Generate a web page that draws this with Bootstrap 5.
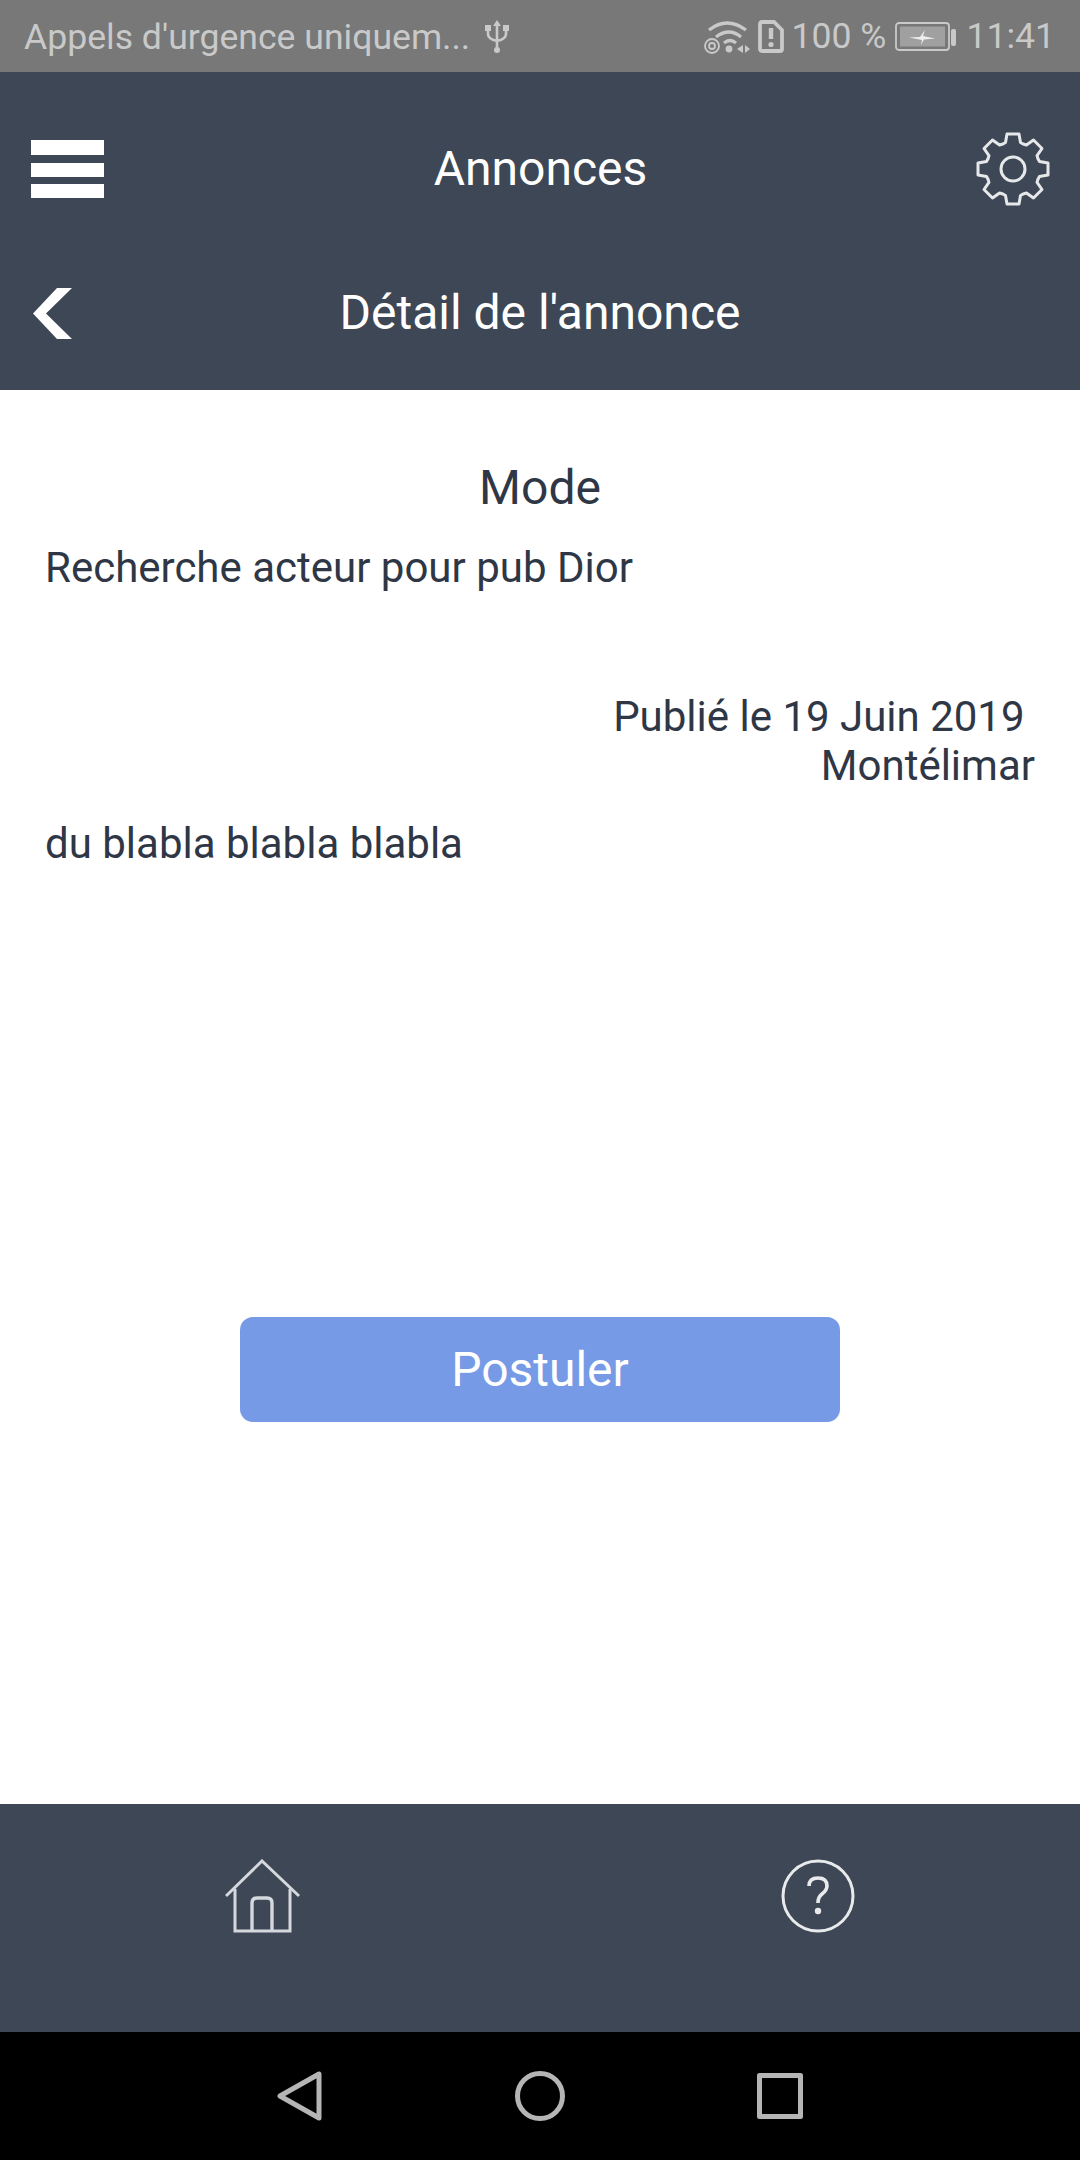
<!DOCTYPE html>
<html lang="fr">
<head>
<meta charset="utf-8">
<title>Détail de l'annonce</title>
<link rel="stylesheet" href="https://cdn.jsdelivr.net/npm/bootstrap@5.3.0/dist/css/bootstrap.min.css">
<style>
html,body{margin:0;background:#fff}
body{font-family:Roboto,"Liberation Sans",sans-serif;color:#2f3746}
.phone{width:1080px;height:2160px}
.statusbar{height:72px;background:#777877;color:#c9c9c9;font-size:35.600px;padding:2px 25px 0 24px;flex:none}
.statusbar svg{display:block}
.st-left{gap:15px}
.st-msg{line-height:70px}
.st-right{gap:8px}
.st-gap{margin-left:1px}
.top-head{height:194px;background:#3e4756;color:#fff;padding:0 30px 0 31px;flex:none}
.sub-head{height:124px;background:#3e4756;color:#fff;padding:0 0 30px 33px;flex:none}
.head-title{font-size:48px;line-height:1}
.side-slot{width:74px}
.detail-title{margin-left:-72px}
.main-area{flex:1 1 auto;padding:71px 45px 0;font-size:42px;line-height:49px}
.ad-title{font-size:48px;line-height:54px;margin:0 0 28px;font-weight:400;text-align:center}
.ad-text{margin:0}
.ad-meta{margin:100px 0 29px;text-align:right;white-space:pre-wrap}
.apply-btn{width:600px;height:105px;margin:449px auto 0;display:block;background:#769ae6;border:0;border-radius:13px;color:#fff;font-size:48px;line-height:105px;padding:0}
.foot-bar{height:228px;background:#3e4756;flex:none;padding:55px 225px 0 225px}
.nav-bar{height:128px;background:#000;flex:none;padding:0 277px 0 277px}
</style>
</head>
<body>
<div class="phone d-flex flex-column">
  <div class="statusbar d-flex justify-content-between align-items-center">
    <div class="st-left d-flex align-items-center">
      <span class="st-msg">Appels d'urgence uniquem...</span>
      <svg width="24" height="34" viewBox="0 0 24 34" fill="none" stroke="#c9c9c9" stroke-width="2.6"><path d="M12 5V30M3 9V14Q3 19 12 21Q21 19 21 14V9"/><path d="M12 0L16 6H8Z" fill="#c9c9c9" stroke="none"/><circle cx="12" cy="30" r="3" fill="#c9c9c9" stroke="none"/><rect x="0" y="5" width="6" height="6" fill="#c9c9c9" stroke="none"/><rect x="18" y="5" width="6" height="6" fill="#c9c9c9" stroke="none"/></svg>
    </div>
    <div class="st-right d-flex align-items-center">
      <svg width="46" height="34" viewBox="0 0 46 34" fill="none" stroke="#c9c9c9" stroke-width="3.200"><path d="M5 10Q23 -4 42 10M12 17Q25 7 37 17M20 23Q26 18 32 23"/><circle cx="25" cy="29" r="3.400" fill="#c9c9c9" stroke="none"/><circle cx="8" cy="26" r="7" stroke-width="1.800"/><circle cx="8" cy="26" r="3" stroke-width="1.800"/><path d="M33 29L39 25V33ZM41 25L46 29L41 33Z" fill="#c9c9c9" stroke="none"/></svg>
      <svg width="26" height="33" viewBox="0 0 26 33" fill="none" stroke="#c9c9c9" stroke-width="3.800"><path d="M4 2H16L24 10V29Q24 31 22 31H4Q2 31 2 29V4Q2 2 4 2Z"/><path d="M13 8V19" stroke-width="4.400"/><circle cx="13" cy="24.500" r="2.600" fill="#c9c9c9" stroke="none"/></svg>
      <span>100 %</span>
      <svg class="st-gap" width="62" height="30" viewBox="0 0 62 30" fill="none"><rect x="1" y="1" width="53" height="27" rx="3" stroke="#c9c9c9" stroke-width="1.800"/><rect x="5" y="4.500" width="45" height="20" fill="#a0a0a0"/><rect x="56" y="7" width="5" height="17" rx="2" fill="#c9c9c9"/><path d="M14 15.500L25 15L30 8L28 14L40 16.500L29 17.500L26 23L27 18Z" fill="#eee"/></svg>
      <span class="st-gap">11:41</span>
    </div>
  </div>

  <div class="top-head d-flex justify-content-between align-items-center">
    <div class="side-slot">
      <svg class="d-block" width="74" height="58" viewBox="0 0 74 58" fill="#fff"><rect y="0" width="73" height="15"/><rect y="23" width="73" height="14"/><rect y="44" width="73" height="14"/></svg>
    </div>
    <div class="head-title">Annonces</div>
    <div class="side-slot d-flex justify-content-end">
      <svg width="74" height="74" viewBox="-37 -37 74 74" fill="none" stroke="#e6e8ea" stroke-width="3" stroke-linejoin="round">
        <defs><path id="toothshape" d="M-10.500 -24.800L-7.500 -26.500L-6 -35H6L7.500 -26.500L10.500 -24.800"/></defs>
        <use href="#toothshape"/><use href="#toothshape" transform="rotate(45)"/><use href="#toothshape" transform="rotate(90)"/><use href="#toothshape" transform="rotate(135)"/><use href="#toothshape" transform="rotate(180)"/><use href="#toothshape" transform="rotate(225)"/><use href="#toothshape" transform="rotate(270)"/><use href="#toothshape" transform="rotate(315)"/>
        <circle r="12"/>
      </svg>
    </div>
  </div>

  <div class="sub-head d-flex align-items-center">
    <svg width="39" height="51" viewBox="0 0 39 51" fill="#fff"><path d="M39 0H24L0 25.500L24 51H39L13 25.500Z"/></svg>
    <div class="head-title flex-grow-1 text-center detail-title">Détail de l'annonce</div>
  </div>

  <div class="main-area">
    <h1 class="ad-title">Mode</h1>
    <p class="ad-text">Recherche acteur pour pub Dior</p>
    <p class="ad-meta">Publié le 19 Juin 2019&nbsp;
Montélimar</p>
    <p class="ad-text">du blabla blabla blabla</p>
    <button type="button" class="btn apply-btn">Postuler</button>
  </div>

  <div class="foot-bar d-flex justify-content-between align-items-start">
    <svg width="76" height="74" viewBox="0 0 76 74" fill="none" stroke="#d5d8dc" stroke-width="3"><path d="M1 37L37 2L74 37"/><path d="M10 30V72H65V30"/><path d="M27 72V44Q27 39 32 39H42Q47 39 47 44V72" stroke-width="3.400"/></svg>
    <svg width="74" height="74" viewBox="0 0 74 74" fill="none" stroke="#e8eaec" stroke-width="3"><circle cx="37" cy="37" r="35"/><path d="M28 27Q28 19 37 19Q46 19 46 27Q46 31 41 35Q37 38 37 44" stroke-width="3.600"/><circle cx="37" cy="52" r="3.200" fill="#e8eaec" stroke="none"/></svg>
  </div>

  <div class="nav-bar d-flex justify-content-between align-items-center">
    <svg width="46" height="50" viewBox="0 0 46 50" fill="none" stroke="#b5b5b5" stroke-width="5" stroke-linejoin="round"><path d="M42 3V47L3 25Z"/></svg>
    <svg width="50" height="50" viewBox="0 0 50 50" fill="none" stroke="#b5b5b5" stroke-width="5"><circle cx="25" cy="25" r="22.500"/></svg>
    <svg width="46" height="46" viewBox="0 0 46 46" fill="none" stroke="#b5b5b5" stroke-width="5" stroke-linejoin="round"><rect x="2.500" y="2.500" width="41" height="41"/></svg>
  </div>
</div>
</body>
</html>
